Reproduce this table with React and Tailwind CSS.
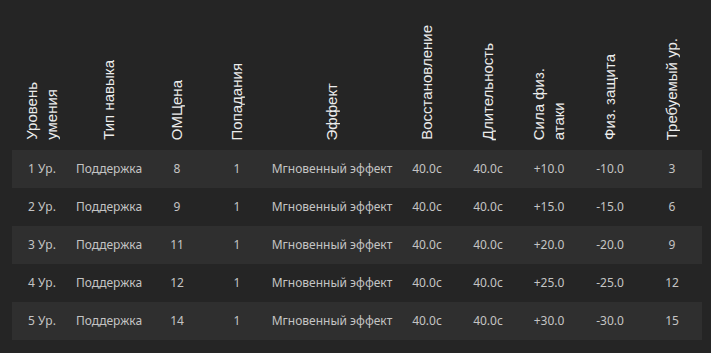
const headers = [
  ['Уровень', 'умения'],
  ['Тип навыка'],
  ['ОМЦена'],
  ['Попадания'],
  ['Эффект'],
  ['Восстановление'],
  ['Длительность'],
  ['Сила физ.', 'атаки'],
  ['Физ. защита'],
  ['Требуемый ур.'],
]

const rows = [
  ['1 Ур.', 'Поддержка', '8', '1', 'Мгновенный эффект', '40.0с', '40.0с', '+10.0', '-10.0', '3'],
  ['2 Ур.', 'Поддержка', '9', '1', 'Мгновенный эффект', '40.0с', '40.0с', '+15.0', '-15.0', '6'],
  ['3 Ур.', 'Поддержка', '11', '1', 'Мгновенный эффект', '40.0с', '40.0с', '+20.0', '-20.0', '9'],
  ['4 Ур.', 'Поддержка', '12', '1', 'Мгновенный эффект', '40.0с', '40.0с', '+25.0', '-25.0', '12'],
  ['5 Ур.', 'Поддержка', '14', '1', 'Мгновенный эффект', '40.0с', '40.0с', '+30.0', '-30.0', '15'],
]

const cols = 'grid w-[690px] grid-cols-[60px_74px_62px_58px_132px_58px_64px_58px_64px_60px]'

export default function App() {
  return (
    <div className="h-[353px] w-[711px] overflow-hidden bg-[#252525] pl-3">
      <div className={`${cols} h-[150px] pb-[10px] font-['Liberation_Sans',Arial,sans-serif] text-[15px] leading-[20px] text-[#ececec]`}>
        {headers.map((h, i) => (
          <div key={i} className="flex items-end justify-center">
            <div className="rotate-180 whitespace-nowrap [writing-mode:vertical-rl]">
              {h.map((line) => (
                <div key={line}>{line}</div>
              ))}
            </div>
          </div>
        ))}
      </div>
      <div className="font-['Noto_Sans',sans-serif] text-[12px] text-[#c4c4c4]">
        {rows.map((r, i) => (
          <div key={i} className={`${cols} h-[38px] items-center ${i % 2 === 0 ? 'bg-[#2f2f2f]' : ''}`}>
            {r.map((c, j) => (
              <div key={j} className="text-center whitespace-nowrap">{c}</div>
            ))}
          </div>
        ))}
      </div>
    </div>
  )
}
